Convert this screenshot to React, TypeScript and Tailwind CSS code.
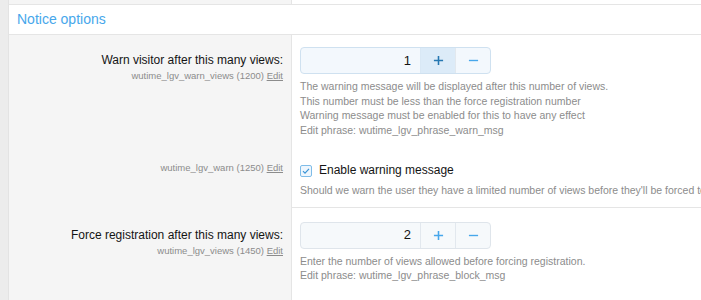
import React from "react"

function Spinner({ value, active }: { value: string; active?: boolean }) {
  return (
    <div
      className={
        "flex h-[27px] w-[191px] rounded-[4px] border " +
        (active ? "border-[#cfe1f0] bg-[#f3f8fd]" : "border-[#dfe5eb] bg-[#f6f9fb]")
      }
    >
      <div className="flex w-[119px] items-center justify-end pr-[9px] text-[13px] text-[#141414]">{value}</div>
      <div
        className={
          "flex w-[35px] items-center justify-center border-l " +
          (active ? "border-[#d9e8f5] bg-[#dcebf8] text-[#2577b1]" : "border-[#e2e8ee] text-[#47a7eb]")
        }
      >
        <svg width="11" height="11" viewBox="0 0 12 12">
          <path d="M6 1v10M1 6h10" stroke="currentColor" strokeWidth="1.7" />
        </svg>
      </div>
      <div className="flex w-[35px] items-center justify-center border-l border-[#e2e8ee] text-[#47a7eb]">
        <svg width="11" height="11" viewBox="0 0 12 12">
          <path d="M1 6h10" stroke="currentColor" strokeWidth="1.5" />
        </svg>
      </div>
    </div>
  )
}

function SubLabel({ name, order }: { name: string; order: string }) {
  return (
    <div className="text-[9.5px] leading-[14px] text-[#8c8c8c]">
      {name} ({order}) <span className="underline">Edit</span>
    </div>
  )
}

export default function App() {
  return (
    <div className="flex h-[300px] w-[701px] overflow-hidden bg-[#ececec] font-['Liberation_Sans',Arial,sans-serif]">
      <div className="w-[8px] shrink-0" />
      <div className="flex min-w-0 flex-1 flex-col border-l border-[#e3e3e3] bg-white">
        <div className="flex h-[5px] shrink-0 border-b border-[#e5e5e5]">
          <div className="w-[282px] bg-[#f5f5f5]" />
          <div className="flex-1 border-l border-[#e5e5e5]" />
        </div>
        <div className="flex h-[30px] shrink-0 items-center border-b border-[#e5e5e5] pl-[8px] text-[14px] text-[#47a7eb]">
          Notice options
        </div>

        {/* row 1 */}
        <div className="flex shrink-0">
          <div className="flex w-[282px] flex-col items-end bg-[#f5f5f5] pr-[8px] pt-[17px]">
            <div className="text-[12px] leading-[17px] text-[#141414]">Warn visitor after this many views:</div>
            <SubLabel name="wutime_lgv_warn_views" order="1200" />
          </div>
          <div className="flex-1 border-l border-[#e5e5e5] pb-[15px] pl-[8px] pt-[12px]">
            <Spinner value="1" active />
            <div className="mt-[5px] text-[10.5px] leading-[14.5px] text-[#8c8c8c]">
              <div>The warning message will be displayed after this number of views.</div>
              <div>This number must be less than the force registration number</div>
              <div>Warning message must be enabled for this to have any effect</div>
              <div>Edit phrase: wutime_lgv_phrase_warn_msg</div>
            </div>
          </div>
        </div>

        {/* row 2 */}
        <div className="flex shrink-0">
          <div className="flex w-[282px] flex-col items-end bg-[#f5f5f5] pr-[8px] pt-[9px]">
            <SubLabel name="wutime_lgv_warn" order="1250" />
          </div>
          <div className="min-w-0 flex-1 overflow-hidden border-b border-l border-[#e5e5e5] pb-[9px] pl-[8px] pt-[10px]">
            <div className="flex items-center gap-[7px]">
              <svg width="12" height="12" viewBox="0 0 12 12" className="shrink-0">
                <rect x="0.5" y="0.5" width="11" height="11" rx="1.5" fill="#eef6fd" stroke="#7fbce8" />
                <path d="M3 6.2l2 2 4-4.4" fill="none" stroke="#3a94d6" strokeWidth="1.2" />
              </svg>
              <span className="text-[12px] leading-[17px] text-[#141414]">Enable warning message</span>
            </div>
            <div className="mt-[4px] whitespace-nowrap text-[10.5px] leading-[14.5px] text-[#8c8c8c]">
              Should we warn the user they have a limited number of views before they'll be forced to register?
            </div>
          </div>
        </div>

        {/* row 3 */}
        <div className="flex flex-1">
          <div className="flex w-[282px] flex-col items-end bg-[#f5f5f5] pr-[8px] pt-[19px]">
            <div className="text-[12px] leading-[17px] text-[#141414]">Force registration after this many views:</div>
            <SubLabel name="wutime_lgv_views" order="1450" />
          </div>
          <div className="flex-1 border-l border-[#e5e5e5] pl-[8px] pt-[14px]">
            <Spinner value="2" />
            <div className="mt-[5px] text-[10.5px] leading-[14.5px] text-[#8c8c8c]">
              <div>Enter the number of views allowed before forcing registration.</div>
              <div>Edit phrase: wutime_lgv_phrase_block_msg</div>
            </div>
          </div>
        </div>
      </div>
    </div>
  )
}
